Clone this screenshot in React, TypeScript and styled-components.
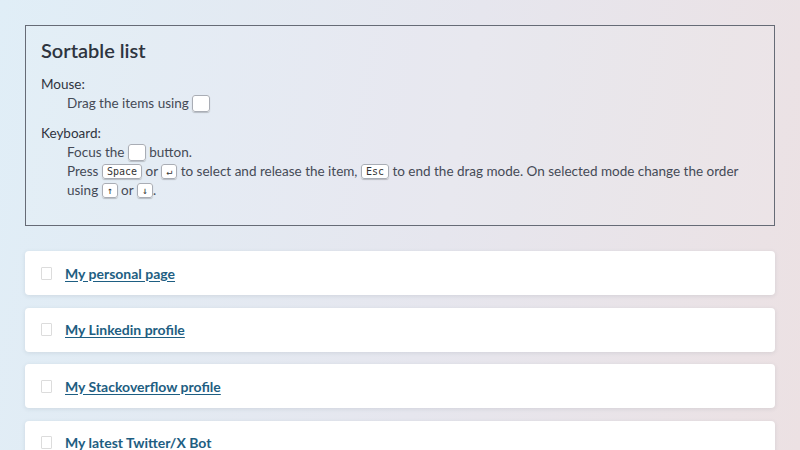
import React from "react";
import styled, { createGlobalStyle } from "styled-components";

const Global = createGlobalStyle`
  html, body { margin: 0; padding: 0; }
  body {
    width: 800px;
    height: 450px;
    overflow: hidden;
    font-family: Lato, "Noto Sans", sans-serif;
    color: #363b47;
    background: linear-gradient(100deg, #e0eef7 0%, #e6e6ee 55%, #ece1e3 100%);
  }
`;

const Page = styled.main`
  padding: 25px;
  display: flex;
  flex-direction: column;
  gap: 25px;
`;

const Info = styled.section`
  border: 1px solid #666b76;
  padding: 12px 15px 25px 15px;
  background: rgba(255, 255, 255, 0.08);
`;

const Title = styled.h1`
  margin: 0 0 13px 0;
  font-size: 20px;
  line-height: 24px;
  font-weight: 600;
  color: #2e3440;
`;

const Dl = styled.dl`
  margin: 0;
  font-size: 13.5px;
  line-height: 19px;
`;

const Dt = styled.dt<{ $gap?: boolean }>`
  margin-top: ${(p) => (p.$gap ? "11px" : "0")};
  color: #2f3440;
`;

const Dd = styled.dd`
  margin: 0 0 0 26px;
  color: #454a56;
`;

const Kbd = styled.kbd<{ $blank?: boolean }>`
  display: inline;
  padding: ${(p) => (p.$blank ? "0 4px" : "1px 4px")};
  border: 1px solid #a9adb5;
  border-radius: 3px;
  background: #fff;
  box-shadow: 0 1px 1px rgba(0, 0, 0, 0.2);
  font-family: "DejaVu Sans Mono", monospace;
  font-size: ${(p) => (p.$blank ? "13px" : "10px")};
  color: #333;
  vertical-align: ${(p) => (p.$blank ? "0" : "1px")};
`;

const List = styled.ul`
  list-style: none;
  margin: 0;
  padding: 0;
  display: flex;
  flex-direction: column;
  gap: 12.5px;
`;

const Item = styled.li`
  height: 44px;
  display: flex;
  align-items: center;
  gap: 13px;
  padding: 0 16px;
  background: #fff;
  border-radius: 4px;
  box-shadow: 0 1px 4px rgba(60, 70, 90, 0.12);
`;

const Handle = styled.button`
  width: 11px;
  height: 13px;
  padding: 0;
  border: 1px solid #dcdcdc;
  border-radius: 1px;
  background: #fff;
`;

const Link = styled.a`
  font-size: 14px;
  font-weight: 700;
  color: #1e5e82;
  text-decoration: underline;
  text-underline-offset: 2px;
`;

const items = [
  "My personal page",
  "My Linkedin profile",
  "My Stackoverflow profile",
  "My latest Twitter/X Bot",
];

export default function App() {
  return (
    <>
      <Global />
      <Page>
        <Info>
          <Title>Sortable list</Title>
          <Dl>
            <Dt>Mouse:</Dt>
            <Dd>
              Drag the items using <Kbd $blank>{"\u00a0"}</Kbd>
            </Dd>
            <Dt $gap>Keyboard:</Dt>
            <Dd>
              Focus the <Kbd $blank>{"\u00a0"}</Kbd> button.
            </Dd>
            <Dd>
              Press <Kbd>Space</Kbd> or <Kbd>↵</Kbd> to select and release the
              item, <Kbd>Esc</Kbd> to end the drag mode. On selected mode change
              the order using <Kbd>↑</Kbd> or <Kbd>↓</Kbd>.
            </Dd>
          </Dl>
        </Info>
        <List>
          {items.map((t) => (
            <Item key={t}>
              <Handle aria-label="drag" />
              <Link href="#">{t}</Link>
            </Item>
          ))}
        </List>
      </Page>
    </>
  );
}
